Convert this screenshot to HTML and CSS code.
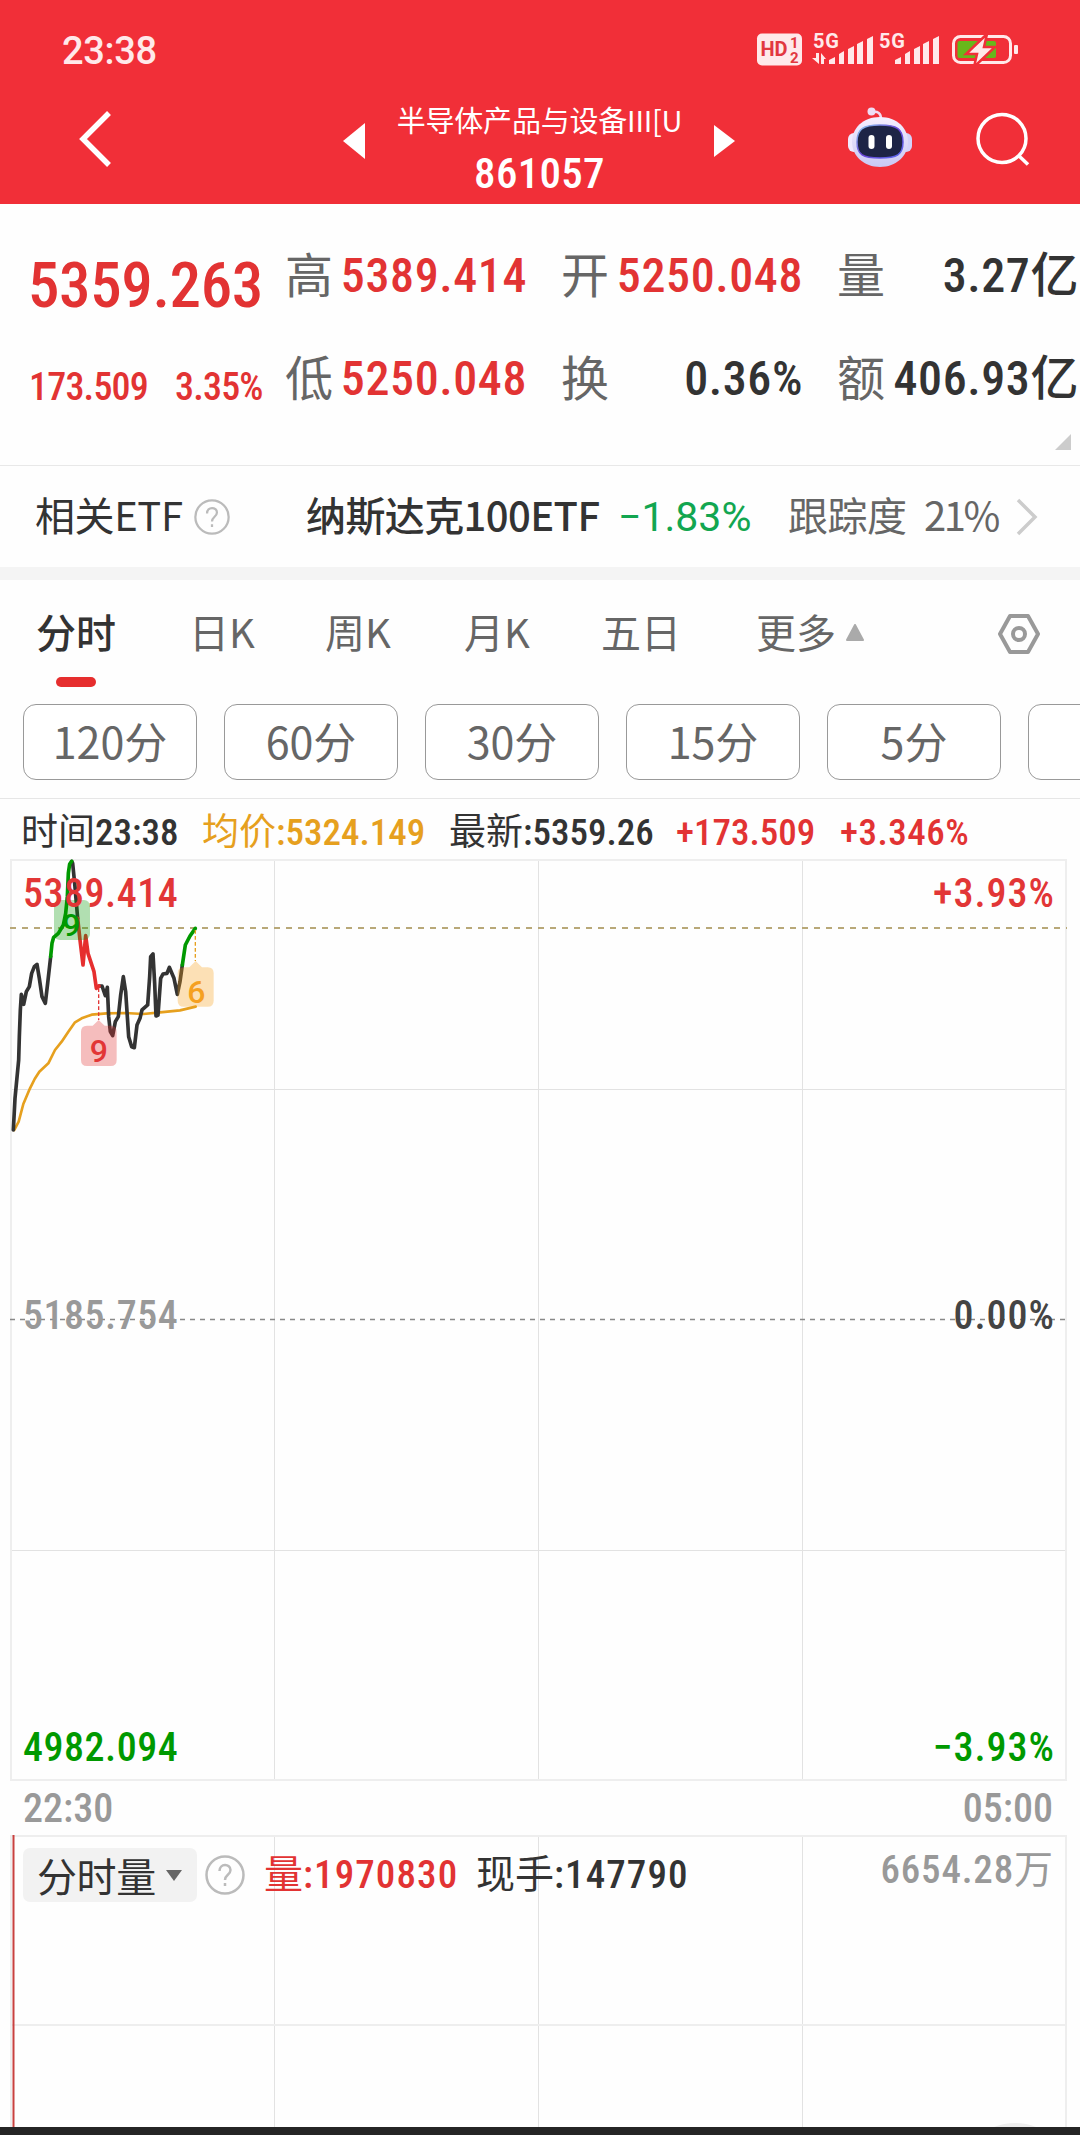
FILE: index.html
```html
<!DOCTYPE html>
<html lang="zh-CN">
<head>
    <meta charset="UTF-8">
    <meta name="viewport" content="width=device-width, initial-scale=1.0">
    <title>半导体产品与设备 861057</title>
    <link rel="stylesheet" href="styles.css">
</head>
<body>
    <header class="header">
        <div class="status">
            <span class="clock">23:38</span>
            <svg class="status-icons" width="264" height="48" viewBox="755 25 264 48">
                <rect x="757" y="33.500" width="45" height="32" rx="5" fill="#ffe9ea"/>
                <text x="760.500" y="56" class="hd" textLength="27">HD</text>
                <text x="790" y="48" class="hd-n">1</text>
                <text x="790" y="62.500" class="hd-n">2</text>
                <g fill="#ffe9ea">
                    <text x="813" y="48" class="five-g" textLength="26">5G</text>
                    <text x="879" y="48" class="five-g" textLength="26">5G</text>
                    <path d="M816 53h3v11l-7-6h4zM821 64V53l5 6h-2v5z"/>
                    <path d="M829 64v-4l6-3v7zM839 64V54l5-3v13zM848 64V49l6-3v18zM857 64V44l6-3v23zM867 64V39l6-3v28z"/>
                    <path d="M895 64v-4l6-3v7zM905 64V54l5-3v13zM914 64V49l6-3v18zM923 64V44l6-3v23zM933 64V39l6-3v28z"/>
                    <rect x="1014" y="45" width="4" height="9" rx="1"/>
                </g>
                <rect x="953.500" y="36.500" width="57" height="26" rx="7" fill="none" stroke="#ffe9ea" stroke-width="3"/>
                <rect x="957.500" y="41" width="38.500" height="17" rx="2" fill="#68b71b"/>
                <path d="M987 34l-21 20h11l-3 13 21-20h-11z" fill="#ffe9ea" stroke="#f12f38" stroke-width="2.500"/>
            </svg>
        </div>
        <nav class="titlebar">
            <svg class="back" width="36" height="60" viewBox="0 0 36 60"><path d="M32 4L6 30l26 26" fill="none" stroke="#fff" stroke-width="5.500"/></svg>
            <svg class="prev" width="22" height="36" viewBox="0 0 22 36"><path d="M22 0v36L0 18z" fill="#fff"/></svg>
            <div class="title">
                <h1>半导体产品与设备III[U</h1>
                <p>861057</p>
            </div>
            <svg class="next" width="21" height="32" viewBox="0 0 21 32"><path d="M0 0v32l21-16z" fill="#fff"/></svg>
            <svg class="robot" width="64" height="62" viewBox="0 0 64 62">
                <defs>
                    <linearGradient id="shell" x1="0" y1="0" x2="0" y2="1">
                        <stop offset="0" stop-color="#f6efff"/>
                        <stop offset="1" stop-color="#c9c8f4"/>
                    </linearGradient>
                    <linearGradient id="rim" x1="0" y1="0" x2="1" y2="1">
                        <stop offset="0" stop-color="#8fd0ef"/>
                        <stop offset=".5" stop-color="#6a44d8"/>
                        <stop offset="1" stop-color="#5a6cf0"/>
                    </linearGradient>
                </defs>
                <path d="M24 5c6-1 9 1 9 7" fill="none" stroke="#f1d9f0" stroke-width="2.500"/>
                <circle cx="23.500" cy="4.500" r="4" fill="#eedcf4"/>
                <rect x="0" y="26" width="12" height="19" rx="6" fill="#f0eaff"/>
                <rect x="52" y="26" width="12" height="19" rx="6" fill="#d4d3fa"/>
                <path d="M32 10c17 0 28 11 28 25S48 60 32 60 4 49 4 35s11-25 28-25z" fill="url(#shell)"/>
                <path d="M32 18c17 0 23 4 23 17s-6 16-23 16S9 48 9 35s6-17 23-17z" fill="#1d2446" stroke="url(#rim)" stroke-width="1.500"/>
                <rect x="20.500" y="28" width="6" height="14" rx="3" fill="#fff"/>
                <rect x="38" y="28" width="6" height="14" rx="3" fill="#fff"/>
            </svg>
            <svg class="search" width="54" height="54" viewBox="0 0 54 54"><g fill="none" stroke="#fff" stroke-width="3.500"><circle cx="26" cy="26.500" r="24"/><path d="M42 43l10 9.500"/></g></svg>
        </nav>
    </header>

    <section class="quote">
        <div class="price">
            <strong>5359.263</strong>
            <div class="change"><span>173.509</span><span>3.35%</span></div>
        </div>
        <dl class="stats">
            <div><dt>高</dt><dd class="red">5389.414</dd></div>
            <div><dt>开</dt><dd class="red">5250.048</dd></div>
            <div><dt>量</dt><dd>3.27亿</dd></div>
            <div><dt>低</dt><dd class="red">5250.048</dd></div>
            <div><dt>换</dt><dd>0.36%</dd></div>
            <div><dt>额</dt><dd>406.93亿</dd></div>
        </dl>
        <i class="corner"></i>
    </section>

    <section class="etf">
        <span class="etf-label">相关ETF</span>
        <svg class="help" width="36" height="36" viewBox="0 0 40 40"><circle cx="20" cy="20" r="18.500"/><path d="M14.500 16c0-8 11-7.500 11-1 0 5-5.500 4.500-5.500 10M20 28v3"/></svg>
        <span class="etf-name">纳斯达克100ETF</span>
        <span class="etf-change">−1.83%</span>
        <span class="etf-track">跟踪度</span>
        <span class="etf-rate">21%</span>
        <svg width="22" height="38" viewBox="0 0 22 38"><path d="M2 2l17 17L2 36" fill="none" stroke="#ccc" stroke-width="3.500"/></svg>
    </section>

    <nav class="tabs">
        <span class="active">分时</span>
        <span>日K</span>
        <span>周K</span>
        <span>月K</span>
        <span>五日</span>
        <span class="more">更多<svg width="18" height="17" viewBox="0 0 18 17"><path d="M9 1l8 15H1z" fill="#aaa" stroke="#aaa" stroke-width="2" stroke-linejoin="round"/></svg></span>
        <svg class="gear" width="42" height="40" viewBox="0 0 42 40"><g fill="none" stroke="#999" stroke-width="4" stroke-linejoin="round"><path d="M12 2h18l10 18-10 18H12L2 20z"/><circle cx="21" cy="20" r="6"/></g></svg>
    </nav>
    <div class="periods">
        <button>120分</button>
        <button>60分</button>
        <button>30分</button>
        <button>15分</button>
        <button>5分</button>
        <button></button>
    </div>

    <div class="info">
        <span><i>时间</i>23:38</span>
        <span class="avg"><i>均价</i>:5324.149</span>
        <span><i>最新</i>:5359.26</span>
        <span class="red">+173.509</span>
        <span class="red last-rate">+3.346%</span>
    </div>

    <svg class="chart" width="1080" height="922" viewBox="0 859 1080 922">
        <path class="grid" d="M274.500 860v920M538.500 860v920M802.500 860v920M11 1089.500h1055M11 1550.500h1055"/>
        <rect class="frame" x="11" y="860" width="1055" height="920"/>
        <path class="last" d="M10 928h1057"/>
        <path class="zero" d="M10 1319.500h1057"/>
        <!-- price and average lines, drawn at 3 units per pixel -->
        <g class="lines" transform="translate(0 850) scale(.33333)">
            <polyline class="avg-line" points="43,840 56,815 70,762 90,715 104,687 118,665 145,640 165,600 185,575 205,545 225,517 245,505 275,494 320,490 375,489 430,492 480,487 540,481 587,470"/>
            <polyline class="black" points="40,840 45,745 56,630 58,560 61,480 64,433 71,463 79,425 88,410 95,370 103,350 111,343 118,385 126,440 136,460 143,400 152,320"/>
            <polyline class="black" points="215,34 218,40 224,100 230,170 233,205"/>
            <polyline class="black" points="297,408 306,408 316,437 322,412 326,500 331,545 338,557 346,515 355,500 362,435 370,380 377,425 386,560 395,590 403,593 411,525 420,505 426,480 443,465 449,380 452,320 459,312 464,400 468,498 474,495 482,385 489,372 501,370 508,352 522,385 532,433 540,395 547,345"/>
            <polyline class="up" points="152,320 156,280 161,262 175,250 190,225 197,190 202,140 205,70 209,42 215,34"/>
            <polyline class="up" points="547,345 556,285 570,258 586,235"/>
            <polyline class="down" points="233,205 240,270 249,345 257,257 264,310 282,365 289,415 297,408"/>
            <path class="lead" stroke="#e23636" d="M296 415v95"/>
            <path class="lead" stroke="#e6a01e" d="M586 240v93"/>
            <rect x="162" y="150" width="108" height="120" rx="18" fill="#090" opacity=".3"/>
            <path d="M261 527h17l18-17 18 17h18q18 0 18 18v85q0 18-18 18h-71q-18 0-18-18v-85q0-18 18-18z" fill="#e23636" opacity=".32"/>
            <path d="M551 352h17l19-19 19 19h17q18 0 18 18v82q0 18-18 18h-72q-18 0-18-18v-82q0-18 18-18z" fill="#f9a11b" opacity=".32"/>
        </g>
        <text class="mark" x="71.500" y="936" fill="#090">9</text>
        <text class="mark" x="99" y="1062" fill="#e23636">9</text>
        <text class="mark" x="196.500" y="1003" fill="#f5a021">6</text>
        <text x="23" y="907" fill="#e23636">5389.414</text>
        <text x="23" y="1329" fill="#999">5185.754</text>
        <text x="23" y="1761" fill="#090">4982.094</text>
        <text class="end" x="1055" y="907" fill="#e23636">+3.93%</text>
        <text class="end" x="1055" y="1329" fill="#444">0.00%</text>
        <text class="end" x="1055" y="1761" fill="#090">−3.93%</text>
    </svg>

    <div class="times"><span>22:30</span><span>05:00</span></div>

    <section class="volume">
        <div class="volume-head">
            <span class="select">分时量<svg width="16" height="11" viewBox="0 0 16 11"><path d="M0 0h16L8 11z" fill="#666"/></svg></span>
            <svg class="help" width="40" height="40" viewBox="0 0 40 40"><circle cx="20" cy="20" r="18.500"/><path d="M14.500 16c0-8 11-7.500 11-1 0 5-5.500 4.500-5.500 10M20 28v3"/></svg>
            <span class="red total"><i>量</i>:1970830</span>
            <span class="hand"><i>现手</i>:147790</span>
            <span class="max">6654.28<i>万</i></span>
        </div>
        <svg class="volume-grid" width="1080" height="292" viewBox="0 1835 1080 292">
            <path class="grid" d="M274.500 1835v292M538.500 1835v292M802.500 1835v292"/>
            <path class="frame" d="M10 1836h1057M10 2025h1057M1066 1836v292M11 1836v292"/>
            <path d="M13.500 1835v292" stroke="#c8413f" stroke-width="2"/>
            <circle cx="1015" cy="2180" r="57" fill="#eee"/>
        </svg>
    </section>
    <footer class="bottom"></footer>
</body>
</html>
```
FILE: styles.css
```css
* {
    box-sizing: border-box;
    margin: 0;
    padding: 0;
}
body {
    width: 1080px;
    height: 2135px;
    overflow: hidden;
    background: #fefefe;
    color: #333;
    font-family: "Roboto Condensed", "Noto Sans CJK SC", sans-serif;
    font-weight: 500;
}
svg {
    display: block;
    flex: none;
}
span {
    white-space: nowrap;
}
span i {
    font-style: normal;
    font-weight: 400;
    letter-spacing: 0;
}
.red {
    color: #e23333;
}

/* header */
.header {
    height: 204px;
    background: #f12f38;
    color: #fff;
}
.status {
    display: flex;
    justify-content: space-between;
    align-items: center;
    height: 98px;
    padding: 0 61px 0 62px;
}
.clock {
    padding-top: 4px;
    font: 500 38px/44px Roboto, sans-serif;
    letter-spacing: -.3px;
    color: #ffe9ea;
}
.status-icons text {
    font-family: Roboto, sans-serif;
    font-weight: 700;
}
.hd {
    font-size: 20px;
    fill: #e2383f;
}
.status-icons .hd-n {
    font-size: 15px;
    fill: #e2383f;
}
.five-g {
    font-size: 20px;
}
.titlebar {
    display: flex;
    align-items: flex-start;
    padding-left: 77px;
}
.back {
    margin-top: 11px;
}
.prev {
    margin: 25px 0 0 230px;
}
.title {
    width: 349px;
    text-align: center;
}
.title h1 {
    font: 400 29px/42px "Noto Sans CJK SC", sans-serif;
    letter-spacing: -.2px;
}
.title p {
    margin-top: 2px;
    font-size: 43px;
    line-height: 62px;
    letter-spacing: .3px;
}
.next {
    margin-top: 27px;
}
.robot {
    margin: 9px 0 0 113px;
}
.search {
    margin: 14px 0 0 64px;
}

/* quote */
.quote {
    position: relative;
    display: flex;
    height: 262px;
    padding: 19px 1px 0 28px;
    border-bottom: 1px solid #e8e8e8;
}
.price {
    width: 257px;
    color: #e23333;
}
.price strong {
    display: block;
    padding-top: 26px;
    font-size: 63px;
    font-weight: 500;
    line-height: 74px;
    letter-spacing: -.4px;
}
.change {
    display: flex;
    gap: 27px;
    margin-top: 42px;
    padding-left: 1px;
    font-size: 38px;
    line-height: 44px;
    letter-spacing: -.8px;
}
.stats {
    display: grid;
    grid-template-columns: repeat(3, 242px);
    grid-auto-rows: 103px;
    column-gap: 34px;
}
.stats div {
    display: flex;
    justify-content: space-between;
    font-size: 48px;
    line-height: 103px;
}
.stats dt {
    color: #666;
    font-family: "Noto Sans CJK SC", sans-serif;
    font-weight: 400;
    line-height: 99px;
}
.stats dd {
    line-height: 105px;
    letter-spacing: .6px;
    white-space: nowrap;
}
.corner {
    position: absolute;
    right: 9px;
    bottom: 15px;
    border-left: 16px solid transparent;
    border-bottom: 16px solid #ccc;
}

/* etf */
.etf {
    display: flex;
    align-items: center;
    height: 114px;
    padding: 0 0 0 35px;
    border-bottom: 13px solid #f4f4f4;
    font: 400 40px/58px "Noto Sans CJK SC", sans-serif;
}
.etf span {
    margin-top: -5px;
}
.help {
    fill: none;
    stroke: #bbb;
    stroke-width: 2.5;
}
.etf-label {
    width: 159px;
    letter-spacing: -.4px;
}
.etf .etf-name {
    width: 312px;
    margin-left: 76px;
    font-weight: 500;
    letter-spacing: -.6px;
}
.etf .etf-change {
    width: 170px;
    margin-top: 0;
    color: #12a650;
    font-family: Roboto, sans-serif;
    font-size: 41px;
}
.etf-track {
    width: 136px;
    color: #666;
    letter-spacing: -.5px;
}
.etf-rate {
    width: 92px;
    color: #666;
    letter-spacing: -2.5px;
}

/* tabs */
.tabs {
    display: grid;
    grid-template-columns: 153px 136px 139px 137px 155px 242px 42px;
    height: 124px;
    padding: 22px 0 0 36px;
    color: #666;
    font: 400 40px/58px "Noto Sans CJK SC", sans-serif;
}
.active {
    color: #333;
    font-weight: 500;
}
.active::after {
    content: "";
    display: block;
    width: 40px;
    height: 10px;
    margin: 17px 0 0 20px;
    border-radius: 5px;
    background: #e62e2e;
}
.more {
    display: flex;
    gap: 10px;
}
.more svg {
    margin-top: 22px;
}
.gear {
    margin-top: 12px;
}
.periods {
    display: flex;
    gap: 27px;
    height: 95px;
    padding-left: 23px;
    border-bottom: 1px solid #e6e6e6;
    overflow: hidden;
}
.periods button {
    flex: none;
    width: 174px;
    height: 76px;
    padding-bottom: 5px;
    border: 1px solid #999;
    border-radius: 13px;
    background: #fff;
    color: #666;
    font: 400 43px/68px "Noto Sans CJK SC", sans-serif;
}

/* price chart */
.info {
    display: grid;
    grid-template-columns: 181px 247px 227px 164px 200px;
    height: 60px;
    padding-left: 21px;
    font-size: 37px;
    line-height: 67px;
}
.last-rate {
    letter-spacing: .5px;
}
.avg {
    color: #e6a01e;
}
.grid {
    fill: none;
    stroke: #e2e2e2;
}
.frame {
    fill: none;
    stroke: #eee;
    stroke-width: 2;
}
.last {
    stroke: #b8a878;
    stroke-width: 2;
    stroke-dasharray: 6 6;
}
.zero {
    stroke: #888;
    stroke-width: 1.5;
    stroke-dasharray: 5 5;
}
.chart text {
    font-size: 40px;
    letter-spacing: .5px;
}
.chart .end {
    letter-spacing: 1px;
    text-anchor: end;
}
.chart .mark {
    font-family: Roboto, sans-serif;
    font-size: 32px;
    text-anchor: middle;
}
.lines polyline {
    fill: none;
    stroke-linecap: round;
    stroke-linejoin: round;
    stroke-width: 11;
}
.lines .avg-line {
    stroke: #e6a01e;
    stroke-width: 8;
}
.black {
    stroke: #333;
}
.up {
    stroke: #090;
}
.down {
    stroke: #e62e2e;
}
.lead {
    stroke-width: 4;
    stroke-dasharray: 11 7;
}
.times {
    display: flex;
    justify-content: space-between;
    height: 54px;
    padding: 0 27px 0 23px;
    color: #999;
    font-size: 40px;
    line-height: 56px;
}

/* volume */
.volume {
    position: relative;
    height: 292px;
}
.volume-grid {
    position: absolute;
    inset: 0;
    z-index: -1;
}
.volume-head {
    display: flex;
    align-items: center;
    padding: 13px 27px 0 23px;
    font-size: 39px;
    line-height: 54px;
}
.select {
    display: flex;
    align-items: center;
    gap: 10px;
    width: 174px;
    height: 54px;
    margin-right: 8px;
    padding-left: 14px;
    border-radius: 7px;
    background: #f2f2f2;
    font: 400 40px/52px "Noto Sans CJK SC", sans-serif;
    letter-spacing: -.4px;
}
.total {
    width: 212px;
    margin-left: 19px;
    letter-spacing: 1.1px;
}
.hand {
    letter-spacing: 1.1px;
}
.max {
    margin: -11px 0 0 auto;
    color: #999;
    letter-spacing: .8px;
}
.bottom {
    height: 8px;
    background: #252525;
}
```
